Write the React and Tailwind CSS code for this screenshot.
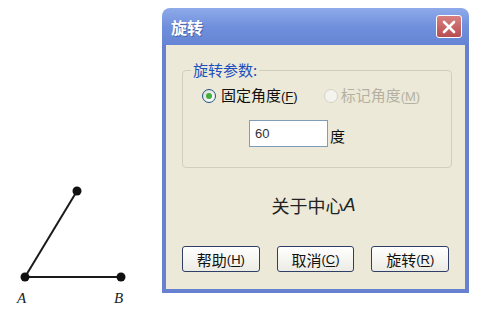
const cjk = { fontFamily: '"Noto Sans CJK SC", "Noto Sans", sans-serif' };
const latin = { fontFamily: '"Liberation Sans", sans-serif' };

function Diagram() {
  return (
    <svg width="162" height="330" className="shrink-0">
      <line x1="25" y1="277" x2="77" y2="191" stroke="#1a1a1a" strokeWidth="2" />
      <line x1="25" y1="277" x2="121" y2="277" stroke="#1a1a1a" strokeWidth="2" />
      <circle cx="77" cy="191" r="4.5" fill="#111" />
      <circle cx="25" cy="277" r="4.5" fill="#111" />
      <circle cx="121" cy="277" r="4.5" fill="#111" />
      <text x="17" y="303" fontSize="15" fontStyle="italic" fontFamily='"Liberation Serif", serif' fill="#222">A</text>
      <text x="114" y="303" fontSize="15" fontStyle="italic" fontFamily='"Liberation Serif", serif' fill="#222">B</text>
    </svg>
  );
}

function Key({ children }) {
  return <span className="underline underline-offset-2">{children}</span>;
}

function XPButton({ label, accel }) {
  return (
    <button
      className="w-[78px] h-[26px] rounded-[3px] border border-[#2f3f66] bg-gradient-to-b from-[#ffffff] to-[#ecebe4] text-[15px] leading-none text-[#111] flex items-center justify-center"
      style={cjk}
    >
      {label}
      <span className="text-[13px]" style={latin}>
        (<Key>{accel}</Key>)
      </span>
    </button>
  );
}

function Dialog() {
  return (
    <div className="mt-[8px] w-[307px] flex flex-col">
      {/* title bar */}
      <div className="h-[37px] rounded-t-[8px] bg-gradient-to-b from-[#8eaaea] via-[#7090dc] to-[#6584d4] flex items-center justify-between pl-[9px] pr-[7px]">
        <span className="text-white font-bold text-[16px] [text-shadow:1px_1px_0_#4a63a8]" style={cjk}>
          旋转
        </span>
        <div className="w-[26px] h-[23px] rounded-[3px] border border-white bg-gradient-to-b from-[#d88080] to-[#b84c50] flex items-center justify-center">
          <svg width="14" height="14" viewBox="0 0 14 14">
            <path d="M2 2L12 12M12 2L2 12" stroke="white" strokeWidth="2.6" strokeLinecap="round" />
          </svg>
        </div>
      </div>

      {/* body */}
      <div className="h-[248px] bg-[#ece9d8] border-x-4 border-b-4 border-[#6880d0] px-[16px] pt-[17px] flex flex-col">
        <fieldset className="h-[106px] w-[270px] border border-[#d0cebf] rounded-[4px] px-[8px]">
          <legend className="px-[2px] text-[15px] leading-[16px] text-[#1d4fbf]" style={cjk}>
            旋转参数:
          </legend>
          <div className="mt-[9px] ml-[11px] flex items-center text-[15px] leading-[16px]" style={cjk}>
            <span className="w-[14px] h-[14px] rounded-full border border-[#1c5180] bg-gradient-to-br from-[#dcdcd4] to-white flex items-center justify-center">
              <span className="w-[6px] h-[6px] rounded-full bg-[#3fae3f]" />
            </span>
            <span className="ml-[5px] text-[#111]">
              固定角度<span className="text-[13px]" style={latin}>(<Key>F</Key>)</span>
            </span>
            <span className="ml-[26px] w-[14px] h-[14px] rounded-full border border-[#d4d2c6] bg-[#f4f3ee]" />
            <span className="ml-[3px] text-[#b4b1a2]">
              标记角度<span className="text-[13px]" style={latin}>(<Key>M</Key>)</span>
            </span>
          </div>
          <div className="mt-[15px] ml-[58px] flex items-end">
            <div
              className="w-[79px] h-[27px] bg-white border border-[#7f9db9] flex items-center pl-[5px] text-[13px] text-[#333]"
              style={latin}
            >
              60
            </div>
            <span className="ml-[2px] mb-[3px] text-[15px] leading-[16px] text-[#111]" style={cjk}>
              度
            </span>
          </div>
        </fieldset>

        <div className="mt-[27px] flex justify-center text-[18px] leading-[20px] text-[#222] pr-[4px]" style={cjk}>
          关于中心
          <span className="italic" style={latin}>A</span>
        </div>

        <div className="mt-[31px] flex gap-[17px]">
          <XPButton label="帮助" accel="H" />
          <XPButton label="取消" accel="C" />
          <XPButton label="旋转" accel="R" />
        </div>
      </div>
    </div>
  );
}

export default function App() {
  return (
    <div className="w-[488px] h-[330px] bg-white flex">
      <Diagram />
      <Dialog />
    </div>
  );
}
